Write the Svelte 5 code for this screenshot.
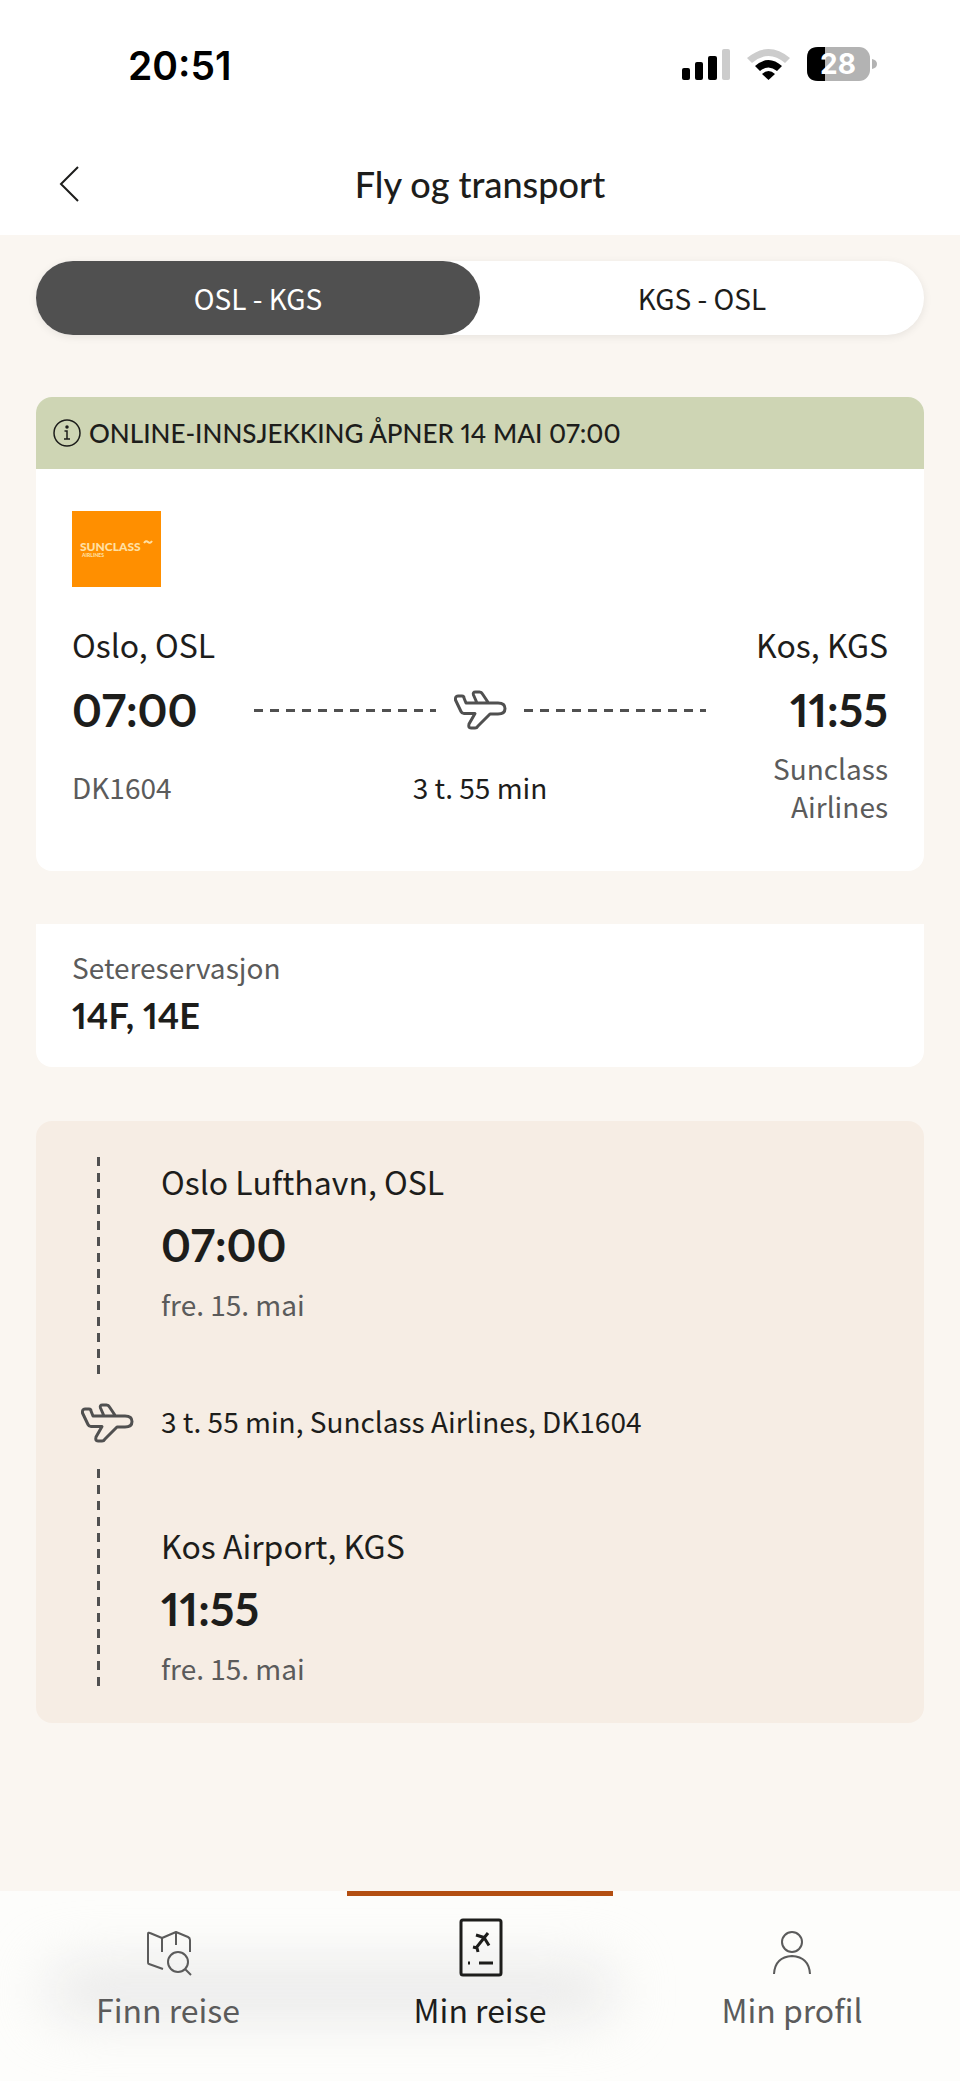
<script>
  let activeLeg = $state(0);
  let activeTab = $state('Min reise');

  const legs = ['OSL - KGS', 'KGS - OSL'];
  const flight = {
    number: 'DK1604',
    airline: 'Sunclass Airlines',
    duration: '3 t. 55 min',
    seats: '14F, 14E'
  };
  const stops = [
    { name: 'Oslo Lufthavn, OSL', time: '07:00', date: 'fre. 15. mai' },
    { name: 'Kos Airport, KGS', time: '11:55', date: 'fre. 15. mai' }
  ];
  const tabs = ['Finn reise', 'Min reise', 'Min profil'];
</script>

{#snippet plane()}
  <svg class="plane" width="54" height="42" viewBox="0 0 54 42" aria-hidden="true">
    <path d="M5 7h4q2 0 2 2l2 5h32q7 0 7 5.5t-7 5.500H37L25 37q-1 2-3 2h-4q-3 0-2-4l6-10.500H11q-2 0-3-2L2.500 11Q2 7 5 7zM24 14L20.500 6q-1-3 2-3h4q2 0 3 2l6 9" />
  </svg>
{/snippet}

<div class="app">
  <header>
    <div class="status">
      <span class="clock">20:51</span>
      <svg class="signals" width="200" height="40" viewBox="0 0 200 40" aria-hidden="true">
        <rect x="2" y="22" width="8" height="12" rx="2" />
        <rect x="15" y="16" width="8" height="18" rx="2" />
        <rect x="28" y="10" width="9" height="24" rx="2" />
        <rect x="42" y="3" width="8" height="31" rx="2" fill="#ccc" />
        <path d="M67 12l5 5q16.500-14 33 0l5-5q-21.500-18-43 0z" fill="#ccc" />
        <path d="M75 20l5 5q8.500-7 17 0l5-5q-13.500-12-27 0z" />
        <path d="M82 28l6.500 6 6.500-6q-6.500-6-13 0z" />
        <rect x="127" y="1" width="63" height="34" rx="11" fill="#b3b3b3" />
        <path d="M145 1h-7q-11 0-11 11v12q0 11 11 11h7z" />
        <path d="M192 13q5 1 5 5t-5 5z" fill="#b3b3b3" />
        <text x="158" y="28" text-anchor="middle">28</text>
      </svg>
    </div>
    <div class="titlebar">
      <button class="back" aria-label="Tilbake">
        <svg width="20" height="36" viewBox="0 0 20 36"><path d="M19 1L2 18l17 17" /></svg>
      </button>
      <h1>Fly og transport</h1>
    </div>
  </header>

  <main>
    <div class="switch">
      {#each legs as leg, i}
        <button class:active={activeLeg === i} aria-pressed={activeLeg === i} onclick={() => (activeLeg = i)}>{leg}</button>
      {/each}
    </div>

    <section class="card">
      <div class="notice">
        <svg width="28" height="28" viewBox="0 0 28 28" aria-hidden="true">
          <circle cx="14" cy="14" r="13" />
          <path d="M11.500 12h2.500v8M11 20h6" />
          <circle class="dot" cx="14" cy="8" r="1" />
        </svg>
        <span>ONLINE-INNSJEKKING ÅPNER 14 MAI 07:00</span>
      </div>
      <div class="flight">
        <svg class="logo" width="89" height="76" viewBox="0 0 89 76" role="img" aria-label="Sunclass Airlines">
          <rect width="89" height="76" fill="#ff8f00" />
          <text x="8" y="40" font-size="12">SUNCLASS</text>
          <text x="10" y="46" font-size="5">AIRLINES</text>
          <path d="M72 32q2-3 4-1t4-1" />
        </svg>
        <div class="row places">
          <span>Oslo, OSL</span>
          <span>Kos, KGS</span>
        </div>
        <div class="row times">
          <strong>07:00</strong>
          <div class="route">
            <span class="dash"></span>
            {@render plane()}
            <span class="dash"></span>
          </div>
          <strong>11:55</strong>
        </div>
        <div class="details">
          <span class="muted">{flight.number}</span>
          <span>{flight.duration}</span>
          <span class="muted airline">{flight.airline}</span>
        </div>
      </div>
    </section>

    <section class="seats">
      <span class="muted">Setereservasjon</span>
      <strong>{flight.seats}</strong>
    </section>

    <section class="timeline">
      {#each stops as stop, i}
        {#if i > 0}
          {@render plane()}
          <p class="leg">{flight.duration}, {flight.airline}, {flight.number}</p>
        {/if}
        <span class="line"></span>
        <div class="stop" class:last={i > 0}>
          <span class="place">{stop.name}</span>
          <strong>{stop.time}</strong>
          <span class="muted">{stop.date}</span>
        </div>
      {/each}
    </section>
  </main>

  <nav>
    {#each tabs as tab}
      <button class:active={activeTab === tab} onclick={() => (activeTab = tab)}>
        {#if tab === 'Finn reise'}
          <svg width="60" height="60" viewBox="0 0 60 60" aria-hidden="true">
            <path d="M25 51L11 46q-1 0-1-2V16q0-2 2-1l12 5 14-6 12 5q2 1 2 3v12M24 20v14M38 14v13" />
            <circle cx="40" cy="44" r="10" />
            <path d="M47 51l6 6" />
          </svg>
        {:else if tab === 'Min reise'}
          <svg class="pass" width="60" height="60" viewBox="0 0 60 60" aria-hidden="true">
            <rect x="11" y="2" width="40" height="55" rx="2" />
            <path d="M26 30L38 15M26 17l8 2.500 5 8M23 29l4 1 1 4M29 45h14M18 45h2" />
          </svg>
        {:else}
          <svg width="60" height="60" viewBox="0 0 60 60" aria-hidden="true">
            <circle cx="30" cy="24" r="10" />
            <path d="M12 56q1-17 18-18 17 1 18 18" />
          </svg>
        {/if}
        <span>{tab}</span>
      </button>
    {/each}
  </nav>
</div>

<style>
  :global(body) {
    background: #faf6f1;
  }

  .app {
    display: flex;
    flex-direction: column;
    min-height: 100vh;
    font-family: 'Noto Sans CJK JP', 'Open Sans', sans-serif;
    font-size: 28px;
    line-height: 38px;
    color: #1d1d1b;
  }

  button {
    font: inherit;
    color: inherit;
    border: none;
    background: none;
    padding: 0;
    cursor: pointer;
  }

  h1,
  p {
    margin: 0;
  }

  strong,
  h1,
  .notice {
    font-family: Lato, sans-serif;
    font-variant-numeric: proportional-nums;
  }

  .muted {
    color: #5b5b5b;
  }

  /* Header */
  header {
    background: #fff;
  }

  .status {
    display: flex;
    justify-content: space-between;
    align-items: center;
    height: 132px;
    padding: 0 80px 0 128px;
    box-sizing: border-box;
  }

  .clock {
    font-family: Inter, sans-serif;
    font-size: 39px;
    font-weight: 600;
    color: #000;
  }

  .signals text {
    font-family: Inter, sans-serif;
    font-size: 28px;
    font-weight: 700;
    fill: #fff;
  }

  .titlebar {
    display: grid;
    grid-template-columns: 40px 1fr 40px;
    align-items: center;
    height: 103px;
    padding: 0 49px;
  }

  .back {
    display: flex;
    justify-content: center;
  }

  .back path {
    fill: none;
    stroke: #1d1d1b;
    stroke-width: 2;
  }

  h1 {
    font-size: 36px;
    font-weight: 500;
    text-align: center;
  }

  main {
    flex: 1;
    padding: 26px 36px 0;
  }

  .switch {
    display: flex;
    border-radius: 37px;
    background: #fff;
    box-shadow: 0 2px 8px rgba(0, 0, 0, 0.08);
  }

  .switch button {
    flex: 1;
    height: 74px;
    border-radius: 37px;
  }

  .switch button.active {
    background: #505050;
    color: #fff;
  }

  /* Flight card */
  .card {
    margin-top: 62px;
    border-radius: 16px;
    background: #fff;
    overflow: hidden;
  }

  .notice {
    display: flex;
    align-items: center;
    gap: 8px;
    height: 72px;
    padding: 0 17px;
    background: #ced5b4;
    font-size: 26px;
    font-weight: 500;
  }

  .notice svg {
    fill: none;
    stroke: #1d1d1b;
    stroke-width: 1.5;
  }

  .notice .dot {
    fill: #1d1d1b;
  }

  .flight {
    padding: 42px 36px 46px;
  }

  .logo {
    display: block;
    margin-bottom: 37px;
  }

  .logo text {
    font-family: Lato, sans-serif;
    font-weight: 900;
    fill: #ffe0a3;
  }

  .logo path {
    fill: none;
    stroke: #ffe0a3;
    stroke-width: 2;
  }

  .row {
    display: flex;
    justify-content: space-between;
    align-items: center;
  }

  .places,
  .place {
    font-size: 32px;
    line-height: 40px;
  }

  .times,
  .stop strong {
    font-size: 45px;
    line-height: 60px;
  }

  .times {
    gap: 56px;
    margin-top: 16px;
  }

  .times strong {
    width: 126px;
  }

  .times strong:last-child {
    text-align: right;
  }

  .route {
    display: flex;
    flex: 1;
    align-items: center;
    gap: 17px;
  }

  .dash {
    flex: 1;
    height: 3px;
    background: repeating-linear-gradient(90deg, #505050 0 9px, transparent 9px 16px);
  }

  .plane {
    fill: none;
    stroke: #505050;
    stroke-width: 3;
    stroke-linejoin: round;
  }

  .details {
    display: grid;
    grid-template-columns: 1fr 1fr 1fr;
    align-items: center;
    margin-top: 9px;
    text-align: center;
  }

  .details span:first-child {
    text-align: left;
  }

  .airline {
    justify-self: end;
    width: 130px;
    text-align: right;
  }

  .seats {
    display: flex;
    flex-direction: column;
    gap: 4px;
    margin-top: 53px;
    padding: 24px 36px 27px;
    border-radius: 0 0 16px 16px;
    background: #fff;
  }

  .seats strong {
    font-size: 36px;
    line-height: 50px;
  }

  /* Timeline */
  .timeline {
    display: grid;
    grid-template-columns: 54px 1fr;
    column-gap: 27px;
    align-items: center;
    margin-top: 54px;
    padding: 36px 44px;
    border-radius: 16px;
    background: #f6ede4;
  }

  .line {
    align-self: stretch;
    width: 3px;
    margin-left: 17px;
    background: repeating-linear-gradient(#505050 0 9px, transparent 9px 16px);
  }

  .stop {
    display: flex;
    flex-direction: column;
    padding: 4px 0 54px;
  }

  .stop strong {
    margin: 14px 0 10px;
  }

  .stop.last {
    padding: 56px 0 0;
  }

  .leg {
    padding: 25px 0 29px;
  }

  /* Bottom navigation */
  nav {
    position: relative;
    display: grid;
    grid-template-columns: repeat(3, 1fr);
    height: 190px;
    padding: 0 12px;
    background: #fdfdfb;
    overflow: hidden;
  }

  nav::before {
    content: '';
    position: absolute;
    top: 76px;
    left: 5%;
    width: 59%;
    height: 48px;
    border-radius: 24px;
    background: #e7e7e7;
    filter: blur(28px);
  }

  nav button {
    position: relative;
    display: flex;
    flex-direction: column;
    align-items: center;
    gap: 9px;
    padding-top: 22px;
    border-top: 5px solid transparent;
    margin: 0 23px;
    color: #5b5b5b;
    font-size: 32px;
    line-height: 44px;
  }

  nav button.active {
    border-top-color: #b34f12;
    color: #1d1d1b;
  }

  nav svg {
    fill: none;
    stroke: currentColor;
    stroke-width: 2;
    stroke-linejoin: round;
  }

  nav .pass {
    stroke-width: 3;
  }
</style>
